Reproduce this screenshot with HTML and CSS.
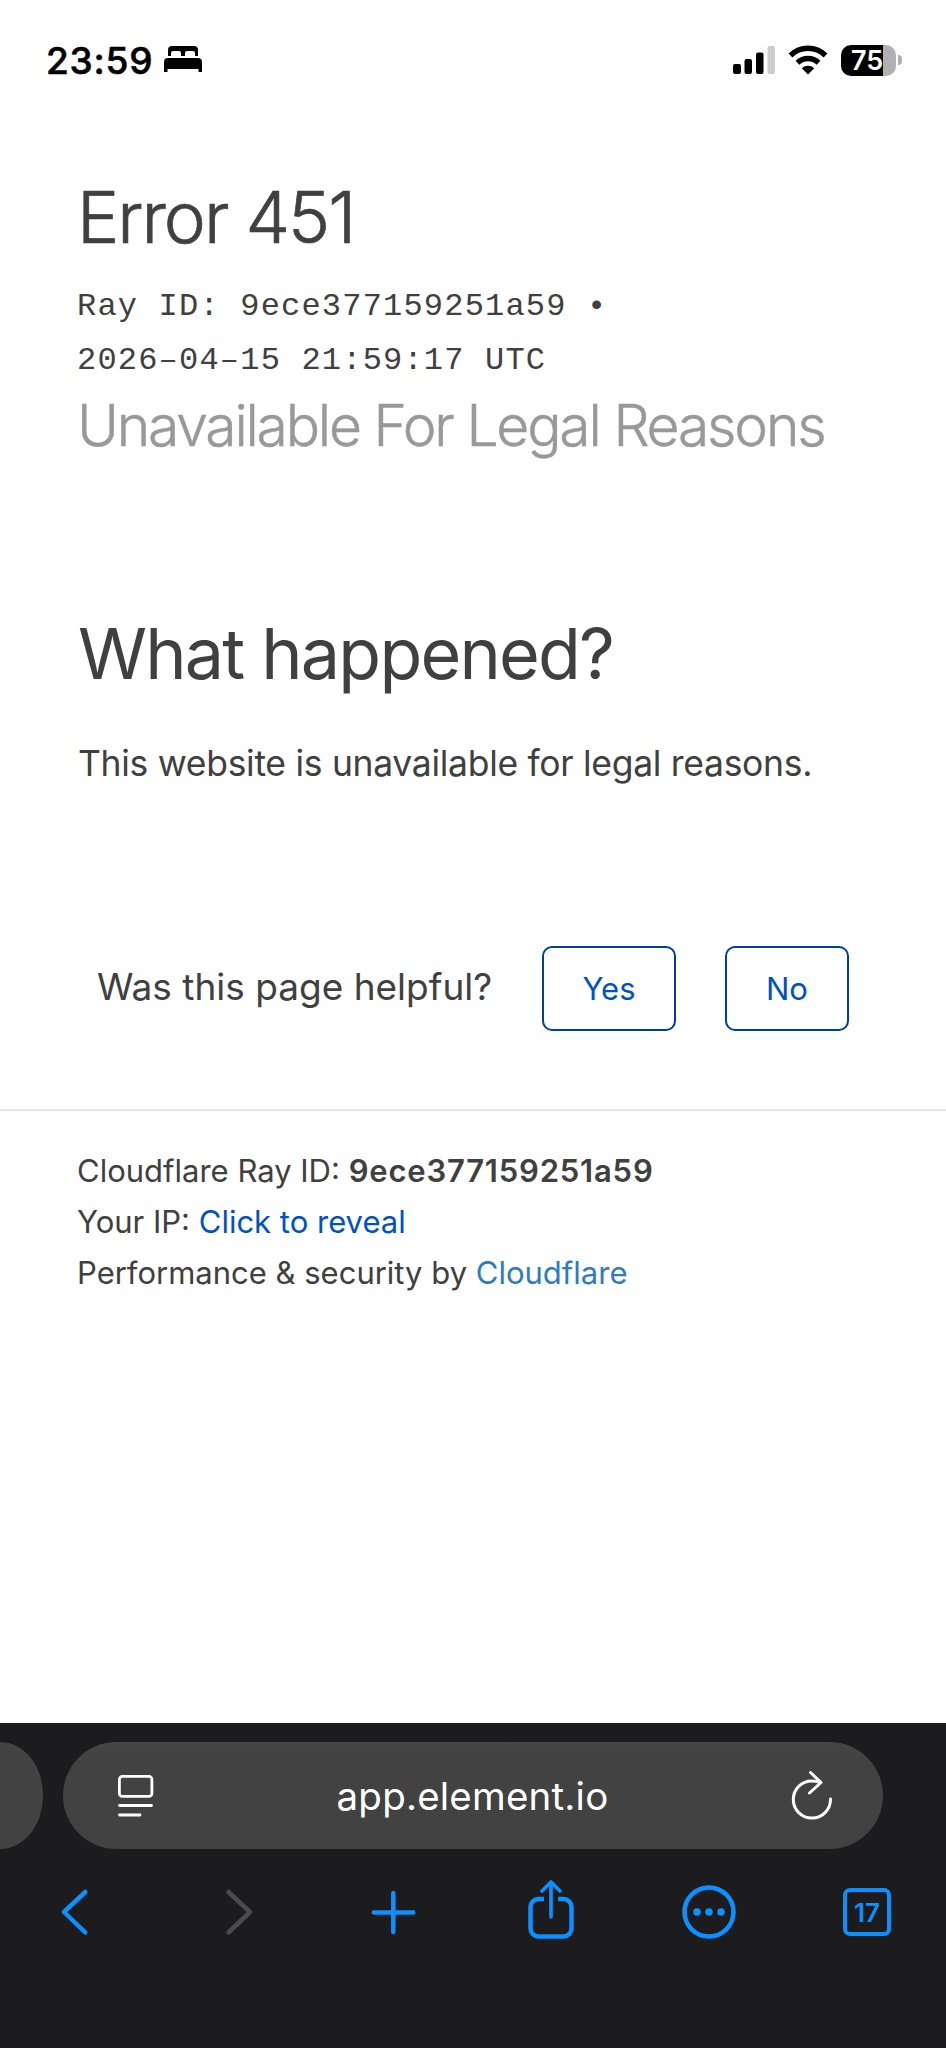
FILE: index.html
```
<!DOCTYPE html>
<html lang="en">
<head>
    <meta charset="UTF-8">
    <meta name="viewport" content="width=device-width, initial-scale=1.0">
    <title>Error 451</title>
    <link rel="stylesheet" href="styles.css">
</head>
<body>
    <div class="phone">
        <!-- Status bar -->
        <header class="status-bar">
            <span class="time">23:59</span>
            <svg class="bed" width="38" height="28" viewBox="0 0 38 28">
                <path d="M4 10V4a4 4 0 0 1 4-4h22a4 4 0 0 1 4 4v6h-3V7a2 2 0 0 0-2-2h-6a2 2 0 0 0-2 2v3h-4V7a2 2 0 0 0-2-2H9a2 2 0 0 0-2 2v3z"/>
                <path d="M0 26V16a4 4 0 0 1 4-4h30a4 4 0 0 1 4 4v10h-3.500v-3h-31v3z"/>
            </svg>
            <svg class="signal" width="42" height="28" viewBox="0 0 42 28">
                <rect x="0" y="18" width="8" height="10" rx="2"/>
                <rect x="11.500" y="13" width="7.500" height="15" rx="2"/>
                <rect x="23" y="6.500" width="7.500" height="21.500" rx="2"/>
                <rect x="34.500" y="0" width="7.500" height="28" rx="2" fill="#ccc"/>
            </svg>
            <svg class="wifi" width="40" height="30" viewBox="0 0 40 30">
                <path d="M2.500 10.500a25 25 0 0 1 35 0M9.500 17.800a15.200 15.200 0 0 1 21 0" fill="none" stroke="#000" stroke-width="5.500"/>
                <path d="M20 29.500l-6.200-6.300a9 9 0 0 1 12.400 0z"/>
            </svg>
            <div class="battery"><span>75</span></div>
            <div class="battery-tip"></div>
        </header>

        <!-- Error page -->
        <main>
            <section class="error">
                <h1>Error 451</h1>
                <p class="ray">Ray ID: 9ece377159251a59 &bull;<br>2026&#8211;04&#8211;15 21:59:17 UTC</p>
                <h2>Unavailable For Legal Reasons</h2>
            </section>

            <section class="happened">
                <h2>What happened?</h2>
                <p>This website is unavailable for legal reasons.</p>
            </section>

            <div class="feedback">
                <span>Was this page helpful?</span>
                <button class="btn-yes">Yes</button>
                <button class="btn-no">No</button>
            </div>

            <footer>
                <p class="ray-id">Cloudflare Ray ID: <strong>9ece377159251a59</strong></p>
                <p>Your IP: <a href="#" class="reveal">Click to reveal</a></p>
                <p>Performance &amp; security by <a href="#">Cloudflare</a></p>
            </footer>
        </main>

        <!-- Browser controls -->
        <div class="browser">
            <div class="tabs">
                <div class="prev-tab"></div>
                <div class="address">
                    <svg width="36" height="44" viewBox="0 0 36 44" fill="none" stroke="#fff" stroke-width="2.800" stroke-linecap="round">
                        <rect x="1.400" y="2.400" width="32.500" height="20" rx="3"/>
                        <path d="M1.500 31.500h32M1.500 41h20.500"/>
                    </svg>
                    <span>app.element.io</span>
                    <svg width="42" height="50" viewBox="0 0 42 50" fill="none" stroke="#fff" stroke-width="3" stroke-linecap="round" stroke-linejoin="round">
                        <path d="M39.500 28a18.600 18.600 0 1 1-18.600-18.100c3 0 5.500.4 8 1.600M19.500 1.500l10.500 10-11.500 10.500"/>
                    </svg>
                </div>
            </div>
            <nav>
                <svg viewBox="0 0 64 64"><path d="M40.300 12L19 32l21.300 20.500"/></svg>
                <svg viewBox="0 0 64 64" class="disabled"><path d="M25.500 12L47 32 25.500 52.500"/></svg>
                <svg viewBox="0 0 64 64"><path d="M32.300 13v39M12.800 32.500h39.500"/></svg>
                <svg viewBox="0 0 64 64">
                    <path d="M25 19h-5.500a8 8 0 0 0-8 8v21.500a8 8 0 0 0 8 8h25a8 8 0 0 0 8-8V27a8 8 0 0 0-8-8H39" stroke-linecap="butt"/>
                    <path d="M32 37V3M23 11l9-9 9 9" stroke-width="3.600"/>
                </svg>
                <svg viewBox="0 0 64 64">
                    <circle cx="32" cy="32" r="24.500"/>
                    <g fill="#0a91ff" stroke="none"><circle cx="20" cy="32" r="3.800"/><circle cx="32" cy="32" r="3.800"/><circle cx="44" cy="32" r="3.800"/></g>
                </svg>
                <div class="tab-count"><span>17</span></div>
            </nav>
        </div>
    </div>
</body>
</html>
```
FILE: styles.css
```
* {
    box-sizing: border-box;
    margin: 0;
    padding: 0;
}

body {
    font-family: Inter, "Liberation Sans", sans-serif;
    color: #404040;
    background-color: #fff;
}

.phone {
    display: flex;
    flex-direction: column;
    height: 2048px;
    overflow: hidden;
}

svg {
    display: block;
    flex: none;
}

/* Status bar */
.status-bar {
    display: flex;
    align-items: center;
    height: 120px;
    padding: 0 44px 0 46px;
    color: #000;
}

.time {
    width: 118px;
    font-size: 37px;
    font-weight: 500;
    letter-spacing: 0.8px;
    white-space: nowrap;
    -webkit-text-stroke: 0.6px #000;
}

.signal {
    margin-left: auto;
}

.wifi {
    margin: 0 13px;
}

.battery {
    width: 55px;
    height: 31px;
    border-radius: 10px;
    background: linear-gradient(to right, #000 42px, #b0b0b0 42px);
    color: #fff;
    font-size: 27px;
    font-weight: 600;
    line-height: 31px;
    padding-left: 10px;
}

.battery-tip {
    width: 4px;
    height: 10px;
    margin-left: 2px;
    border-radius: 0 5px 5px 0;
    background-color: #b0b0b0;
}

/* Error page */
main {
    flex: 1;
}

.error {
    padding: 55px 77px 0;
    white-space: nowrap;
}

.error h1 {
    font-size: 71px;
    font-weight: 300;
    line-height: 84px;
    letter-spacing: -2px;
    -webkit-text-stroke: 0.7px #404040;
}

.ray {
    margin-top: 21px;
    font-family: "Courier New", "Liberation Mono", monospace;
    font-size: 32px;
    line-height: 53.5px;
    letter-spacing: 1.2px;
}

.error h2 {
    font-size: 57px;
    font-weight: 300;
    line-height: 78px;
    letter-spacing: -2.2px;
    color: #999;
    -webkit-text-stroke: 0.5px #999;
}

.happened {
    padding: 147px 78px 0;
    white-space: nowrap;
}

.happened h2 {
    font-size: 70px;
    font-weight: 400;
    line-height: 84px;
    letter-spacing: -1.8px;
}

.happened p {
    margin-top: 41px;
    font-size: 35.5px;
    line-height: 54px;
    letter-spacing: -0.3px;
}

.feedback {
    display: flex;
    align-items: center;
    margin-top: 155px;
    padding-left: 97px;
    font-size: 37px;
    white-space: nowrap;
}

.feedback span {
    width: 445px;
    padding-bottom: 5px;
}

.feedback button {
    height: 85px;
    border: 2px solid #003da1;
    border-radius: 10px;
    background-color: #fff;
    color: #0051c3;
    font-family: inherit;
    font-size: 31px;
}

.btn-yes {
    width: 134px;
    margin-right: 49px;
}

.btn-no {
    width: 124px;
}

footer {
    margin-top: 78px;
    padding: 34px 77px 0;
    border-top: 2px solid #e6e6e6;
    font-size: 31px;
    line-height: 51px;
    white-space: nowrap;
}

footer strong {
    font-weight: 600;
    letter-spacing: 0.8px;
}

footer a {
    color: #2f7bbf;
    text-decoration: none;
}

footer .reveal {
    color: #0051c3;
}

/* Browser controls */
.browser {
    height: 325px;
    padding-top: 19px;
    background-color: #1c1c1e;
}

.tabs {
    display: flex;
    gap: 20px;
}

.prev-tab {
    width: 43px;
    height: 107px;
    border-radius: 0 43px 43px 0 / 0 53px 53px 0;
    background-color: #434344;
}

.address {
    display: flex;
    align-items: center;
    justify-content: space-between;
    width: 820px;
    height: 107px;
    padding: 0 50px 0 55px;
    border-radius: 54px;
    background: linear-gradient(#464647, #424242 16px);
    color: #fff;
    font-size: 38.5px;
    letter-spacing: 0.2px;
}

nav {
    display: flex;
    justify-content: space-between;
    margin-top: 31px;
    padding: 0 47px 0 45px;
}

nav svg {
    width: 64px;
    height: 64px;
    fill: none;
    stroke: #0a91ff;
    stroke-width: 4.5;
    stroke-linecap: round;
    stroke-linejoin: round;
}

nav .disabled {
    stroke: #4b4b4d;
}

.tab-count {
    display: flex;
    align-items: center;
    justify-content: center;
    width: 48px;
    height: 48px;
    margin: 8px;
    border: 4px solid #0a91ff;
    border-radius: 7px;
    color: #0a91ff;
    font-size: 26px;
    font-weight: 600;
}
```
